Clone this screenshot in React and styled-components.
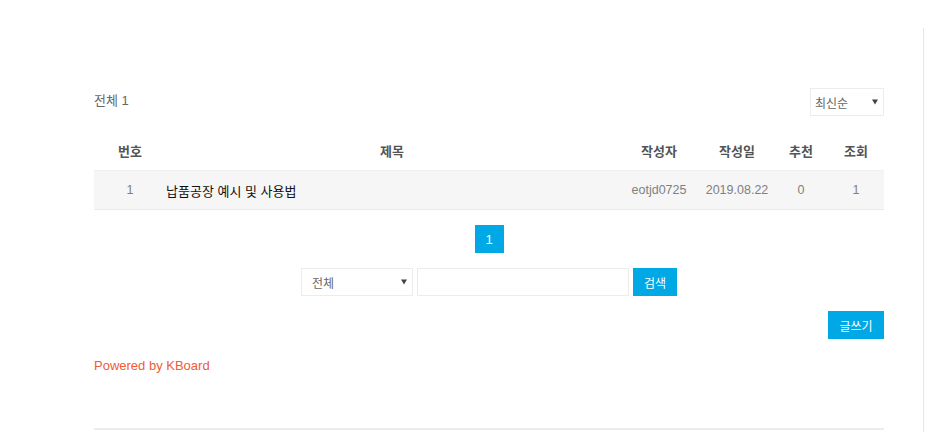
import React from "react";
import styled, { createGlobalStyle } from "styled-components";

const Global = createGlobalStyle`
  html, body { margin: 0; padding: 0; background: #fff; }
  body { font-family: "Liberation Sans", "Noto Sans CJK KR", sans-serif; }
  * { box-sizing: border-box; }
`;

const FONT = `"Liberation Sans", "Noto Sans CJK KR", sans-serif`;

const Page = styled.div`
  width: 934px;
  height: 432px;
  padding-top: 28px;
  overflow: hidden;
`;

const Main = styled.main`
  width: 924px;
  height: 404px;
  border-right: 1px solid #e6e6e6;
  padding-left: 94px;
`;

const Board = styled.div`
  width: 790px;
  padding-top: 60px;
  font-family: ${FONT};
`;

const TopBar = styled.div`
  display: flex;
  align-items: center;
  justify-content: space-between;
  height: 28px;
`;

const Total = styled.span`
  font-size: 13px;
  line-height: 16px;
  color: #666;
  margin-top: -3px;
`;

const SelectBox = styled.div`
  position: relative;
  width: ${(p) => p.$w}px;
  height: 28px;
  border: 1px solid #ececec;
  background: #fff;
  display: flex;
  align-items: center;
  padding-left: ${(p) => p.$pl}px;
  font-size: 12px;
  color: #666;
`;

const Arrow = styled.span`
  position: absolute;
  right: 5px;
  top: 50%;
  transform: translateY(-50%);
  width: 0;
  height: 0;
  border-left: 3px solid transparent;
  border-right: 3px solid transparent;
  border-top: 5px solid #444;
`;

const Table = styled.div`
  margin-top: 14px;
`;

const Row = styled.div`
  display: grid;
  grid-template-columns: 72px 1fr 82px 74px 54px 56px;
  align-items: center;
  height: 40px;
`;

const HeadRow = styled(Row)``;

const BodyRow = styled(Row)`
  background: #f6f6f6;
  border-top: 1px solid #efefef;
  border-bottom: 1px solid #eaeaea;
`;

const Th = styled.div`
  text-align: center;
  font-size: 13px;
  font-weight: bold;
  color: #545454;
`;

const Td = styled.div`
  text-align: ${(p) => (p.$left ? "left" : "center")};
  font-size: ${(p) => (p.$left ? "13px" : "12.5px")};
  color: ${(p) => (p.$left ? "#111" : "#808080")};
`;

const Pagination = styled.div`
  display: flex;
  justify-content: center;
  margin-top: 15px;
`;

const PageBtn = styled.span`
  width: 29px;
  height: 28px;
  display: flex;
  align-items: center;
  justify-content: center;
  background: #00a8e6;
  color: #fff;
  font-size: 13px;
`;

const SearchForm = styled.div`
  display: flex;
  justify-content: center;
  align-items: center;
  margin-top: 15px;
`;

const SearchInput = styled.div`
  width: 212px;
  height: 28px;
  border: 1px solid #ececec;
  margin-left: 4px;
`;

const BlueBtn = styled.span`
  height: 28px;
  width: ${(p) => p.$w}px;
  display: flex;
  align-items: center;
  justify-content: center;
  background: #00a8e6;
  color: #fff;
  font-size: 12px;
  margin-left: ${(p) => p.$ml || 0}px;
`;

const Actions = styled.div`
  display: flex;
  justify-content: flex-end;
  margin-top: 15px;
`;

const Powered = styled.div`
  margin-top: 18px;
  font-size: 13px;
  line-height: 18px;
  color: #f15a36;
`;

const BottomLine = styled.div`
  margin-top: 53px;
  border-top: 2px solid #ececec;
`;

export default function App() {
  return (
    <>
      <Global />
      <Page>
        <Main>
          <Board>
            <TopBar>
              <Total>전체 1</Total>
              <SelectBox $w={74} $pl={4}>
                최신순
                <Arrow />
              </SelectBox>
            </TopBar>
            <Table>
              <HeadRow>
                <Th>번호</Th>
                <Th>제목</Th>
                <Th>작성자</Th>
                <Th>작성일</Th>
                <Th>추천</Th>
                <Th>조회</Th>
              </HeadRow>
              <BodyRow>
                <Td>1</Td>
                <Td $left>납품공장 예시 및 사용법</Td>
                <Td>eotjd0725</Td>
                <Td>2019.08.22</Td>
                <Td>0</Td>
                <Td>1</Td>
              </BodyRow>
            </Table>
            <Pagination>
              <PageBtn>1</PageBtn>
            </Pagination>
            <SearchForm>
              <SelectBox $w={112} $pl={10}>
                전체
                <Arrow />
              </SelectBox>
              <SearchInput />
              <BlueBtn $w={44} $ml={4}>검색</BlueBtn>
            </SearchForm>
            <Actions>
              <BlueBtn $w={56}>글쓰기</BlueBtn>
            </Actions>
            <Powered>Powered by KBoard</Powered>
            <BottomLine />
          </Board>
        </Main>
      </Page>
    </>
  );
}
